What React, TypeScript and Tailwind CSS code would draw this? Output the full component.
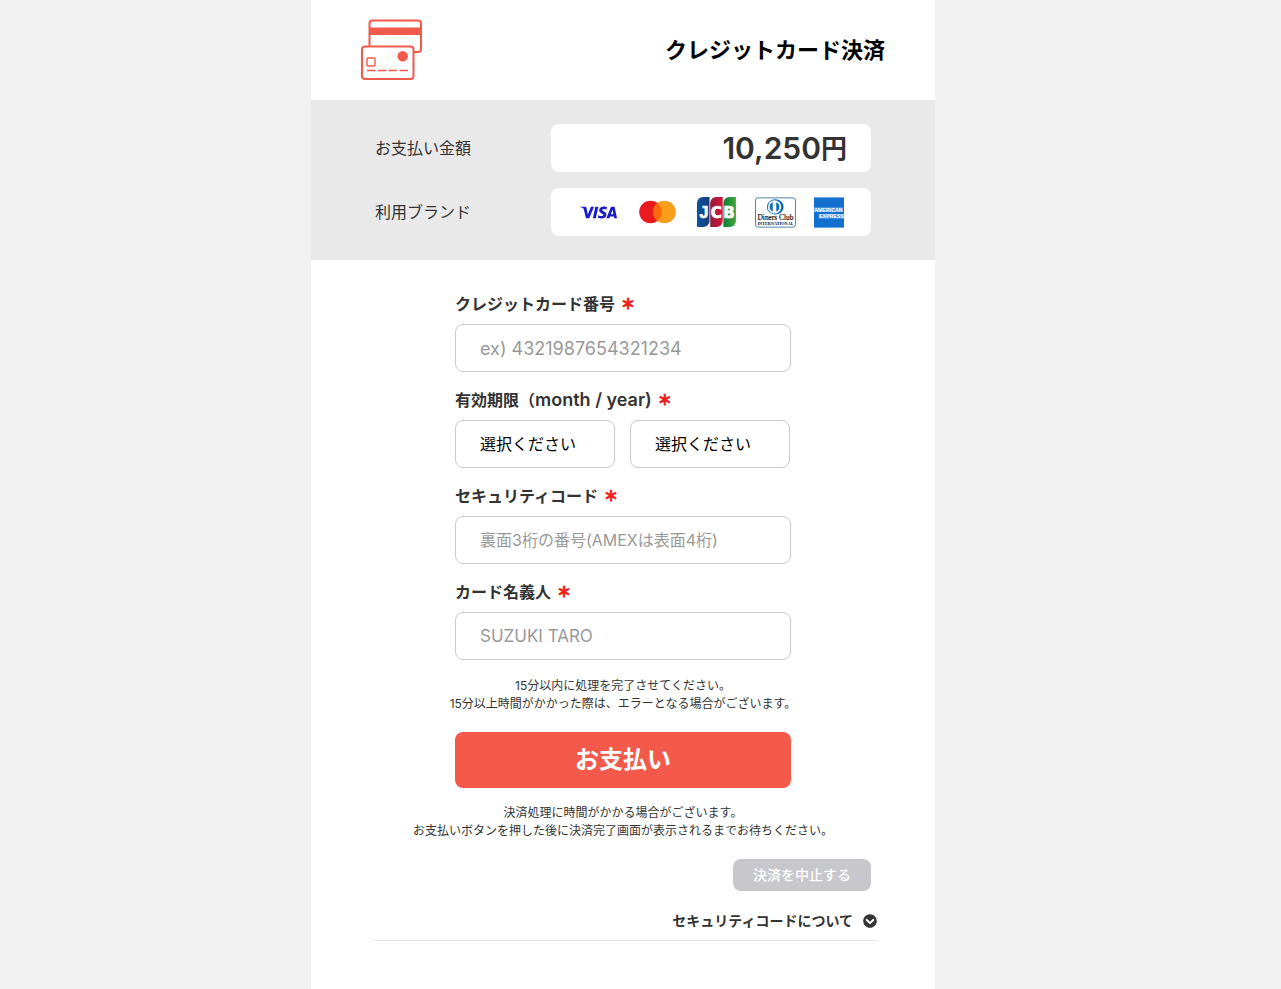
import { useState } from 'react';
import type { ReactNode } from 'react';
import { FaChevronCircleDown } from 'react-icons/fa';
import { SiVisa } from 'react-icons/si';

const months = ['01', '02', '03', '04', '05', '06', '07', '08', '09', '10', '11', '12'];
const years = ['2024', '2025', '2026', '2027', '2028', '2029', '2030', '2031', '2032', '2033'];

const fieldClass =
  'block h-12 rounded-lg border border-[#ccc] bg-white px-6 placeholder:text-[#999] focus:outline-none focus:border-[#f35a4b]';

function CardsIcon() {
  return (
    <svg width="62" height="62" viewBox="0 0 62 62" fill="none" aria-hidden="true">
      <rect x="8.5" y="1.5" width="51.5" height="31.5" rx="3" stroke="#f05a4c" strokeWidth="2" />
      <rect x="8.5" y="8.5" width="51.5" height="7.5" fill="#f05a4c" />
      <rect x="1" y="27.5" width="51.5" height="32.5" rx="3" fill="#fff" stroke="#f05a4c" strokeWidth="2" />
      <rect x="6" y="39" width="8" height="8" rx="1" stroke="#f05a4c" strokeWidth="1.4" />
      <circle cx="41.7" cy="37.2" r="5.2" fill="#f05a4c" />
      <path d="M6 51.5h8.5M17 51.5h8.5M27.5 51.5h8.5M38.5 51.5h8.5" stroke="#f05a4c" strokeWidth="1.5" />
    </svg>
  );
}

function MastercardLogo() {
  return (
    <svg width="37" height="24" viewBox="0 0 37 24" role="img" aria-label="Mastercard">
      <circle cx="11.5" cy="12" r="11.3" fill="#eb1a1e" />
      <circle cx="25.5" cy="12" r="11.3" fill="#f79e1b" />
      <path d="M18.5 3.1a11.3 11.3 0 0 1 0 17.8a11.3 11.3 0 0 1 0-17.8z" fill="#fb6a0d" />
    </svg>
  );
}

function JcbLogo() {
  return (
    <svg width="39" height="30" viewBox="0 0 39 30" role="img" aria-label="JCB">
      <defs>
        <linearGradient id="jcb-blue">
          <stop offset="0" stopColor="#0a559f" />
          <stop offset="1" stopColor="#193a7a" />
        </linearGradient>
        <linearGradient id="jcb-red">
          <stop offset="0" stopColor="#8c1d3c" />
          <stop offset="1" stopColor="#dc1438" />
        </linearGradient>
        <linearGradient id="jcb-green">
          <stop offset="0" stopColor="#0b7d3a" />
          <stop offset="1" stopColor="#41a836" />
        </linearGradient>
      </defs>
      <path d="M0 6a6 6 0 0 1 6-6h6.5v24a6 6 0 0 1-6 6H0z" fill="url(#jcb-blue)" />
      <path d="M13.2 6a6 6 0 0 1 6-6h6.5v24a6 6 0 0 1-6 6h-6.5z" fill="url(#jcb-red)" />
      <path d="M26.4 6a6 6 0 0 1 6-6h6.5v24a6 6 0 0 1-6 6h-6.5z" fill="url(#jcb-green)" />
      <g
        fill="#fff"
        stroke="#fff"
        strokeWidth="0.7"
        fontFamily="DejaVu Sans, sans-serif"
        fontWeight="700"
        fontSize="15"
        textAnchor="middle"
      >
        <text x="7" y="20.5" fontFamily="Liberation Sans, sans-serif" fontSize="16">J</text>
        <text x="19.2" y="20.5">C</text>
        <text x="32" y="20.5">B</text>
      </g>
    </svg>
  );
}

function DinersLogo() {
  return (
    <svg width="42" height="31" viewBox="0 0 42 31" role="img" aria-label="Diners Club">
      <rect x="0.5" y="0.5" width="41" height="30" rx="2.5" fill="#fff" stroke="#4a7fa8" />
      <ellipse cx="20.8" cy="9.8" rx="8.6" ry="7.8" fill="#0f6db5" />
      <circle cx="20" cy="9.8" r="6.8" fill="#fff" />
      <path d="M18.2 5a5.2 5.2 0 0 0 0 9.6zM21.8 5a5.2 5.2 0 0 1 0 9.6z" fill="#0f6db5" />
      <g fill="#111" fontFamily="Liberation Serif, serif" textAnchor="middle">
        <text x="21" y="23.5" fontSize="7.6" stroke="#111" strokeWidth="0.2">Diners Club</text>
        <text x="21" y="28" fontSize="4.4" fontWeight="700">INTERNATIONAL</text>
      </g>
    </svg>
  );
}

function AmexLogo() {
  return (
    <svg width="31" height="31" viewBox="0 0 31 31" role="img" aria-label="American Express">
      <rect width="31" height="31" fill="#1470cf" />
      <path d="M0 10h29.5v5H0zM5 17h26v5H5z" fill="#a9cdf0" opacity="0.45" />
      <g fill="#fff" fontFamily="Liberation Sans, sans-serif" fontWeight="700" fontSize="5.4">
        <text x="0.3" y="14.5">AMERICAN</text>
        <text x="5.2" y="21.5">EXPRESS</text>
      </g>
    </svg>
  );
}

function FieldLabel({ htmlFor, children }: { htmlFor: string; children: ReactNode }) {
  return (
    <label htmlFor={htmlFor} className="mb-2 flex h-6 items-center gap-1.5 text-base font-bold">
      <span>{children}</span>
      <span className="text-sm text-[#f0211a] [-webkit-text-stroke:1px_#f0211a]">＊</span>
    </label>
  );
}

export default function App() {
  const [month, setMonth] = useState('');
  const [year, setYear] = useState('');
  const [helpOpen, setHelpOpen] = useState(false);

  return (
    <div className="min-h-screen bg-[#f1f1f1] pr-[35px] font-['Inter','Noto_Sans_CJK_JP',sans-serif] text-[#333]">
      <main className="mx-auto min-h-screen max-w-[624px] bg-white">
        <header className="flex h-[100px] items-center justify-between px-[50px]">
          <CardsIcon />
          <h1 className="text-[22px] font-bold text-black">クレジットカード決済</h1>
        </header>

        <dl className="flex flex-col gap-4 bg-[#e9e9e9] px-16 py-6">
          <div className="flex items-center justify-between">
            <dt>お支払い金額</dt>
            <dd className="flex h-12 w-80 items-center justify-end rounded-lg bg-white px-6 text-[26px] font-semibold">
              <span className="text-[30px]">10,250</span>円
            </dd>
          </div>
          <div className="flex items-center justify-between">
            <dt>利用ブランド</dt>
            <dd className="flex h-12 w-80 items-center justify-end gap-[18px] rounded-lg bg-white px-[27px]">
              <span className="flex w-[42px] justify-center">
                <SiVisa size={37} color="#1a1acb" role="img" aria-label="VISA" />
              </span>
              <span className="flex w-[42px] justify-center">
                <MastercardLogo />
              </span>
              <span className="flex w-[42px] justify-center">
                <JcbLogo />
              </span>
              <DinersLogo />
              <AmexLogo />
            </dd>
          </div>
        </dl>

        <form className="pt-8 pb-10" onSubmit={(e) => e.preventDefault()}>
          <div className="mx-auto flex max-w-[336px] flex-col gap-4">
            <div>
              <FieldLabel htmlFor="card-number">クレジットカード番号</FieldLabel>
              <input
                id="card-number"
                type="text"
                inputMode="numeric"
                placeholder="ex) 4321987654321234"
                className={`${fieldClass} w-full text-lg`}
              />
            </div>
            <div>
              <FieldLabel htmlFor="month">
                有効期限（<span className="text-lg leading-6 font-semibold">month / year)</span>
              </FieldLabel>
              <div className="flex gap-[15px]">
                <select
                  id="month"
                  value={month}
                  onChange={(e) => setMonth(e.target.value)}
                  className={`${fieldClass} w-40 appearance-none text-base text-black`}
                >
                  <option value="">選択ください</option>
                  {months.map((m) => (
                    <option key={m}>{m}</option>
                  ))}
                </select>
                <select
                  aria-label="year"
                  value={year}
                  onChange={(e) => setYear(e.target.value)}
                  className={`${fieldClass} w-40 appearance-none text-base text-black`}
                >
                  <option value="">選択ください</option>
                  {years.map((y) => (
                    <option key={y}>{y}</option>
                  ))}
                </select>
              </div>
            </div>
            <div>
              <FieldLabel htmlFor="cvc">セキュリティコード</FieldLabel>
              <input
                id="cvc"
                type="text"
                inputMode="numeric"
                placeholder="裏面3桁の番号(AMEXは表面4桁)"
                className={`${fieldClass} w-full text-base`}
              />
            </div>
            <div>
              <FieldLabel htmlFor="card-name">カード名義人</FieldLabel>
              <input
                id="card-name"
                type="text"
                placeholder="SUZUKI TARO"
                className={`${fieldClass} w-full text-[17px]`}
              />
            </div>
          </div>

          <p className="mt-[17px] text-center text-xs leading-[18px]">
            15分以内に処理を完了させてください。
            <br />
            15分以上時間がかかった際は、エラーとなる場合がございます。
          </p>

          <button
            type="submit"
            className="mx-auto mt-[19px] block h-14 w-full max-w-[336px] rounded-lg bg-[#f35a4b] text-2xl font-bold text-white"
          >
            お支払い
          </button>

          <p className="mt-4 text-center text-xs leading-[18px]">
            決済処理に時間がかかる場合がございます。
            <br />
            お支払いボタンを押した後に決済完了画面が表示されるまでお待ちください。
          </p>

          <div className="mt-[19px] flex justify-end px-16">
            <button type="button" className="h-8 rounded-lg bg-[#c7c7cc] px-5 text-sm font-medium text-white">
              決済を中止する
            </button>
          </div>

          <div className="mr-[58px] ml-[61px] mt-5 border-b border-[#e9e9e9] pb-[9px]">
            <button
              type="button"
              aria-expanded={helpOpen}
              onClick={() => setHelpOpen(!helpOpen)}
              className="ml-auto flex items-center gap-2.5 text-sm font-bold"
            >
              セキュリティコードについて
              <FaChevronCircleDown size={14} className={helpOpen ? 'rotate-180' : ''} />
            </button>
          </div>
        </form>
      </main>
    </div>
  );
}
